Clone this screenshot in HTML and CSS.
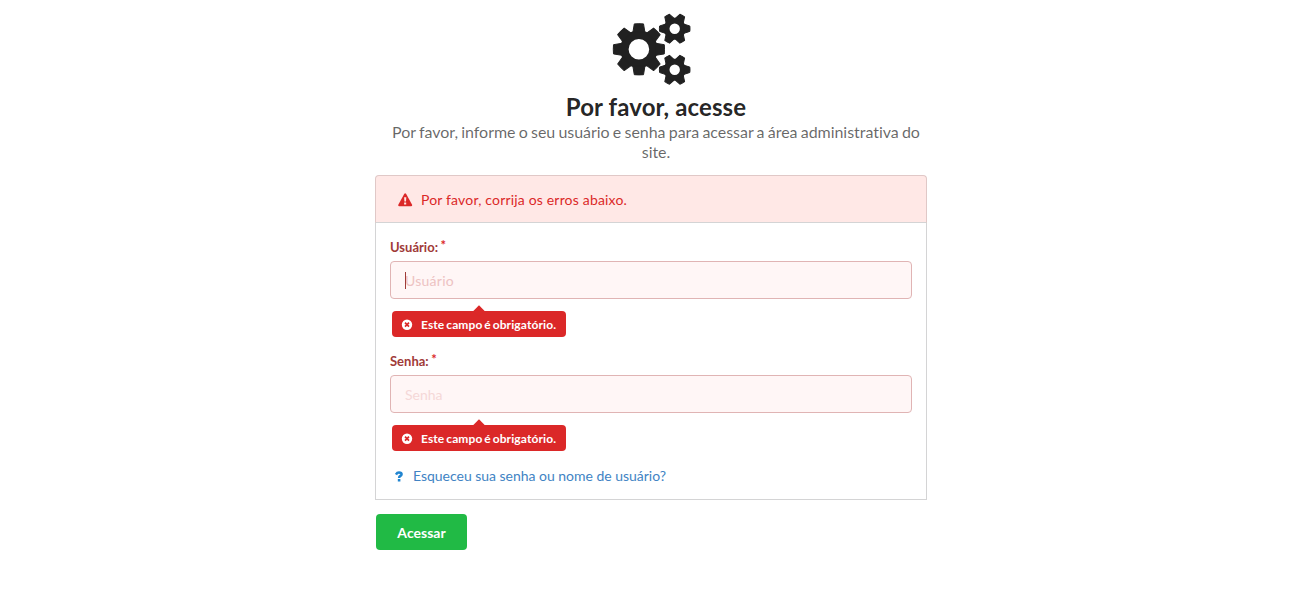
FILE: index.html
```html
<!DOCTYPE html>
<html lang="pt-BR">
<head>
<meta charset="utf-8">
<title>Por favor, acesse</title>
<link rel="stylesheet" href="styles.css">
</head>
<body>
<main class="login">
  <header class="intro">
    <svg class="gears" viewBox="0 0 80 74" width="80" height="74" aria-hidden="true">
      <defs>
        <path id="big-tooth" d="M-6-17L-4.6-25.4Q0-25.8 4.6-25.4L6-17Z"/>
        <path id="small-tooth" d="M-4.5-9.5L-2.7-15.1Q0-15.5 2.7-15.1L4.5-9.5Z"/>
        <g id="small-gear">
          <circle r="8.1" fill="none" stroke-width="5.8"/>
          <use href="#small-tooth" transform="rotate(30)"/>
          <use href="#small-tooth" transform="rotate(90)"/>
          <use href="#small-tooth" transform="rotate(150)"/>
          <use href="#small-tooth" transform="rotate(210)"/>
          <use href="#small-tooth" transform="rotate(270)"/>
          <use href="#small-tooth" transform="rotate(330)"/>
        </g>
      </defs>
      <g transform="translate(26.9 37.3)">
        <circle r="14.5" fill="none" stroke-width="8.4"/>
        <use href="#big-tooth"/>
        <use href="#big-tooth" transform="rotate(45)"/>
        <use href="#big-tooth" transform="rotate(90)"/>
        <use href="#big-tooth" transform="rotate(135)"/>
        <use href="#big-tooth" transform="rotate(180)"/>
        <use href="#big-tooth" transform="rotate(225)"/>
        <use href="#big-tooth" transform="rotate(270)"/>
        <use href="#big-tooth" transform="rotate(315)"/>
      </g>
      <use href="#small-gear" x="62.7" y="16.7"/>
      <use href="#small-gear" x="62.7" y="57.8"/>
    </svg>
    <div class="heading">
      <h1 class="title">Por favor, acesse</h1>
      <p class="subtitle">Por favor, informe o seu usuário e senha para acessar a área administrativa do site.</p>
    </div>
  </header>
  <form>
    <div class="alert">
      <svg class="alert-icon" viewBox="0 0 15 14" width="15" height="14" aria-hidden="true">
        <path d="M6.2.9Q7.2-.5 8.2.9L14.1 11.8Q14.5 13.2 13 13.3H1.4Q-.1 13.2.3 11.8Z" fill="#db2828"/>
        <path d="M6.1 4.2h2.2L8 8.6H6.4ZM6.1 9.5h2.1v2H6.1Z" fill="#ffe8e6"/>
      </svg>
      <span>Por favor, corrija os erros abaixo.</span>
    </div>
    <div class="panel">
      <div class="field">
        <label class="label" for="user">Usuário:<span class="star">*</span></label>
        <div class="control"><input class="input focused" id="user" type="text" placeholder="Usuário"><span class="caret"></span></div>
        <div class="error">
          <svg class="error-icon" viewBox="0 0 12 12" width="12" height="12" aria-hidden="true"><circle cx="6" cy="5.7" r="5.2" fill="#fff"/><path d="M4 3.7l4 4M8 3.7l-4 4" stroke="#db2828" stroke-width="1.7"/></svg>
          <span>Este campo é obrigatório.</span>
        </div>
      </div>
      <div class="field">
        <label class="label" for="pass">Senha:<span class="star">*</span></label>
        <div class="control"><input class="input" id="pass" type="password" placeholder="Senha"></div>
        <div class="error">
          <svg class="error-icon" viewBox="0 0 12 12" width="12" height="12" aria-hidden="true"><circle cx="6" cy="5.7" r="5.2" fill="#fff"/><path d="M4 3.7l4 4M8 3.7l-4 4" stroke="#db2828" stroke-width="1.7"/></svg>
          <span>Este campo é obrigatório.</span>
        </div>
      </div>
      <a class="forgot" href="#">
        <svg class="help-icon" viewBox="0 0 8 11" width="8" height="11" aria-hidden="true"><path d="M1 3.6Q2 1.6 4 1.6 6.6 1.6 6.6 3.3 6.6 4.4 5.2 5 4.1 5.5 4.1 6.9" fill="none" stroke="#2185d0" stroke-width="2.5"/><path d="M2.8 8h2.6v2.5H2.8Z" fill="#2185d0"/></svg>
        <span>Esqueceu sua senha ou nome de usuário?</span>
      </a>
    </div>
    <button class="submit" type="button">Acessar</button>
  </form>
</main>
</body>
</html>
```
FILE: styles.css
```css
* {
  box-sizing: border-box;
}

body {
  margin: 0;
  background: #fff;
  font-family: Lato, "Liberation Sans", sans-serif;
  font-size: 14px;
  line-height: 20px;
  font-variant-ligatures: none;
  color: rgba(0, 0, 0, 0.87);
}

.login {
  width: 552px;
  margin: 0 0 0 375px;
  padding-top: 12px;
}

.intro {
  height: 163px;
}

.gears {
  display: block;
  margin-left: 237px;
  fill: #212121;
  stroke: #212121;
  stroke-width: 1;
  stroke-linejoin: round;
}

.heading {
  margin-left: 10px;
  padding-top: 5px;
  text-align: center;
}

.title {
  margin: 0;
  font-size: 24px;
  line-height: 31px;
  font-weight: 700;
  letter-spacing: 0.1px;
}

.subtitle {
  margin: 0;
  font-size: 16px;
  line-height: 20px;
  letter-spacing: -0.04px;
  word-spacing: -0.8px;
  color: rgba(0, 0, 0, 0.6);
}

.alert {
  display: flex;
  align-items: center;
  height: 48px;
  padding: 2px 22px 0;
  border: 1px solid #e0c8c7;
  border-bottom-color: #d4d4d5;
  border-radius: 4px 4px 0 0;
  background: #ffe8e6;
  color: #db2828;
  letter-spacing: 0.18px;
}

.alert-icon {
  margin-right: 8px;
}

.panel {
  height: 277px;
  padding: 14px;
  border: 1px solid #d4d4d5;
  border-top: 0;
}

.field {
  height: 114px;
}

.label {
  display: block;
  height: 24px;
  font-size: 13px;
  font-weight: 700;
  color: #9f3a38;
}

.star {
  display: inline-block;
  margin-left: 2.6px;
  transform: translateY(-2px);
  color: #db2828;
}

.control {
  position: relative;
  height: 38px;
}

.input {
  display: block;
  width: 522px;
  height: 38px;
  padding: 1px 14px;
  border: 1px solid #e0b4b4;
  border-radius: 4px;
  outline: 0;
  background: #fff6f6;
  font: inherit;
  color: #9f3a38;
}

.input::placeholder {
  color: #f5d8d8;
  opacity: 1;
}

.focused {
  letter-spacing: 0.25px;
}

.focused::placeholder {
  color: #edc2c2;
}

.caret {
  position: absolute;
  left: 15px;
  top: 11px;
  width: 1px;
  height: 17px;
  background: #9f3a38;
}

.error {
  position: relative;
  display: flex;
  align-items: center;
  width: 174px;
  height: 26px;
  margin: 12px 0 0 2px;
  padding: 1px 9px 0;
  border-radius: 4px;
  background: #db2828;
  color: #fff;
  font-size: 12px;
  font-weight: 700;
  letter-spacing: 0.12px;
  word-spacing: -1.2px;
  white-space: nowrap;
}

.error::before {
  content: "";
  position: absolute;
  left: 83px;
  top: -4px;
  width: 8px;
  height: 8px;
  background: #db2828;
  transform: rotate(45deg);
}

.error-icon {
  margin-right: 8px;
}

.forgot {
  display: flex;
  align-items: center;
  height: 22px;
  padding-left: 5px;
  color: #4183c4;
  letter-spacing: -0.02px;
  text-decoration: none;
}

.help-icon {
  margin-right: 10px;
}

.submit {
  display: block;
  width: 91px;
  height: 36px;
  margin: 14px 0 0 1px;
  padding: 2px 0 0;
  border: 0;
  border-radius: 4px;
  background: #21ba45;
  color: #fff;
  font: inherit;
  font-weight: 700;
}
```
